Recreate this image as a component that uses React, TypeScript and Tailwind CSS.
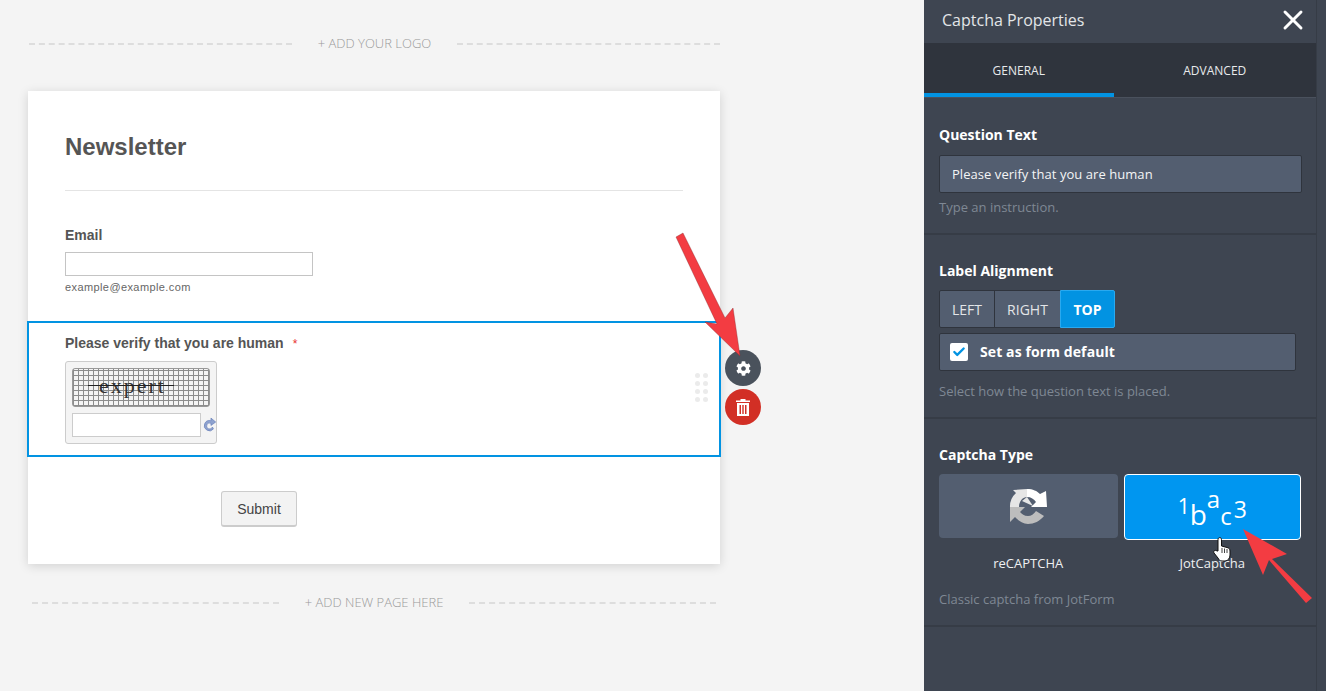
import { X, Check } from 'lucide-react';
import { FaCog } from 'react-icons/fa';

function AddLine({ label, className }: { label: string; className: string }) {
  return (
    <div className={`flex items-center gap-[26px] ${className}`}>
      <div className="flex-1 border-t-2 border-dashed border-[#dddddd]" />
      <span className="font-['Open_Sans',sans-serif] font-light text-[13px] text-[#9a9a9a] leading-4 pb-[2px]">{label}</span>
      <div className="flex-1 border-t-2 border-dashed border-[#dddddd]" />
    </div>
  );
}

function Section({ title, hint, children, className }: { title: string; hint: string; children: React.ReactNode; className: string }) {
  return (
    <section className={`px-[15px] border-b-2 border-[#363c46] ${className}`}>
      <h3 className="text-sm font-bold text-white leading-5">{title}</h3>
      {children}
      <p className="text-[13px] leading-[18px] text-[#7f8894]">{hint}</p>
    </section>
  );
}

function RecaptchaIcon() {
  return (
    <svg width="38" height="37" viewBox="0 0 38 37">
      <path d="M1 19A18 18 0 0 1 7 5L4 2L18 1V9C14 9 10 13 10 19Z" fill="#e6e6e6" />
      <path d="M13 13L24 18L18 9Z" fill="#e6e6e6" />
      <path d="M18 1C24 1 28 3 31 6L37 3L38 19H22L27 14C25 11 22 9 18 9Z" fill="#ffffff" />
      <path d="M1 19V34L6 29C10 33 14 36 19 36C25 36 31 33 35 28L27 23C25 26 22 28 19 28C15 28 13 26 11 24L16 19Z" fill="#bdbdbd" />
    </svg>
  );
}

export default function App() {
  return (
    <div className="relative flex w-[1326px] h-[691px] overflow-hidden font-['Open_Sans',sans-serif]">
      {/* form canvas */}
      <main className="w-[924px] h-full bg-[#f4f4f4] pl-[28px] pt-[35px]">
        <AddLine label="+ ADD YOUR LOGO" className="w-[691px] h-[18px] ml-px" />

        <div className="mt-[38px] w-[692px] h-[473px] bg-white shadow-[0_2px_10px_rgba(0,0,0,0.14)] font-['Liberation_Sans',sans-serif]">
          <div className="mx-[37px] h-[100px] pt-[40px] border-b border-[#e4e4e4]">
            <h1 className="text-2xl leading-8 font-bold text-[#555555]">Newsletter</h1>
          </div>

          <div className="h-[130px] px-[37px] pt-[36px]">
            <label className="block text-sm leading-4 font-bold text-[#555555]">Email</label>
            <div className="mt-[9px] w-[248px] h-[24px] border border-[#c4c4c4] bg-white" />
            <p className="mt-[5px] text-[11px] leading-[13px] tracking-[0.4px] text-[#666666]">example@example.com</p>
          </div>

          {/* selected field */}
          <div className="relative -mx-px h-[136px] border-2 border-[#0293e2] pl-[36px] pt-[12px]">
            <div className="text-sm leading-4 font-bold text-[#555555]">
              Please verify that you are human
              <span className="ml-[9px] font-normal text-xs text-[#e8312f]">*</span>
            </div>
            <div className="mt-[9px] w-[152px] h-[83px] rounded-[3px] border border-[#cccccc] bg-[#f4f4f4] pl-[6px] pt-[6px]">
              <div className="w-[138px] h-[39px] rounded-[3px] border border-[#999999] bg-[#f4f4f4] bg-[repeating-linear-gradient(90deg,#8c8c8c_0_1px,transparent_1px_5px),repeating-linear-gradient(0deg,#8c8c8c_0_1px,transparent_1px_5px)] flex items-center pl-[26px]">
                <span className="relative font-['Liberation_Serif',serif] text-[22px] leading-5 tracking-[2px] text-[#333333] -mt-[3px]">
                  expert
                  <span className="absolute -left-[11px] -right-[8px] top-[9px] h-px bg-[#222222]" />
                </span>
              </div>
              <div className="mt-[6px] flex items-center gap-[2px]">
                <div className="w-[130px] h-[24px] border border-[#cccccc] bg-white" />
                <svg width="13" height="16" viewBox="0 0 13 15">
                  <path d="M10.5 11.5A5.2 5.2 0 1 1 8 3.2V0.5L12.8 4.5L8 8V5.8A3 3 0 1 0 9.5 9.5Z" fill="#8ea2cf" stroke="#5f78b4" strokeWidth="0.6" />
                </svg>
              </div>
            </div>
            {/* drag handle */}
            <div className="absolute left-[666px] top-[50px] grid grid-cols-2 gap-x-[3px] gap-y-[3px]">
              {[0, 1, 2, 3, 4, 5, 6, 7].map((dot) => (
                <span key={dot} className="w-[5px] h-[5px] rounded-full bg-[#ebebeb]" />
              ))}
            </div>
          </div>

          <div className="mt-[34px] pl-[193px]">
            <button className="w-[76px] h-[36px] rounded-[3px] border border-[#cccccc] border-b-2 bg-[#f3f3f3] text-sm text-[#444444]">Submit</button>
          </div>
        </div>

        <AddLine label="+ ADD NEW PAGE HERE" className="w-[684px] h-[18px] ml-[4px] mt-[30px]" />
      </main>

      {/* properties panel */}
      <aside className="w-[402px] h-full bg-[#3e4551] text-white">
        <div className="w-[393px] h-full border-r border-[#363c46]">
          <header className="h-[43px] flex items-center justify-between pl-[18px] pr-[7px] pb-[3px]">
            <h2 className="text-base leading-5 text-[#e3e5e8]">Captcha Properties</h2>
            <X size={32} strokeWidth={2.2} className="text-white -my-2" />
          </header>
          <div className="flex h-[54px] bg-[#2f343d]">
            <div className="w-[190px] flex items-center justify-center border-b-4 border-[#0293e2] text-xs text-[#e8eaec] pt-[6px]">GENERAL</div>
            <div className="w-[203px] flex items-center justify-center text-xs text-[#e8eaec] pt-[2px]">ADVANCED</div>
          </div>

          <Section title="Question Text" hint="Type an instruction." className="border-t border-t-[#4a515d] h-[138px] pt-[27px]">
            <div className="mt-[10px] mb-[5px] w-[363px] h-[38px] flex items-center pl-[12px] pt-px rounded-[2px] border border-[#2f343d] bg-[#535e70] text-[13px] tracking-[0.05px] text-[#f4f5f6]">
              Please verify that you are human
            </div>
          </Section>

          <Section title="Label Alignment" hint="Select how the question text is placed." className="h-[184px] pt-[26px]">
            <div className="mt-[9px] flex h-[38px] text-sm">
              <div className="w-[56px] flex items-center justify-center pt-px rounded-l-[2px] border border-[#2f343d] bg-[#535e70] text-[#e3e5e8]">LEFT</div>
              <div className="w-[67px] -ml-px flex items-center justify-center pt-px border border-[#2f343d] bg-[#535e70] text-[#e3e5e8]">RIGHT</div>
              <div className="w-[55px] -ml-px flex items-center justify-center pt-px rounded-r-[2px] border border-[#2aa9ef] bg-[#0293e2] font-bold text-white">TOP</div>
            </div>
            <div className="mt-[5px] mb-[11px] w-[357px] h-[38px] flex items-center gap-[12px] pl-[10px] rounded-[2px] border border-[#2f343d] bg-[#535e70]">
              <span className="w-[18px] h-[18px] rounded-[2px] bg-white flex items-center justify-center">
                <Check size={14} strokeWidth={4} className="text-[#0293e2]" />
              </span>
              <span className="text-sm tracking-[0.1px] font-bold text-white">Set as form default</span>
            </div>
          </Section>

          <Section title="Captcha Type" hint="Classic captcha from JotForm" className="h-[208px] pt-[26px]">
            <div className="mt-[9px] flex gap-[6px]">
              <div className="w-[179px] h-[64px] rounded-[4px] bg-[#535e70] flex items-center justify-center">
                <RecaptchaIcon />
              </div>
              <div className="w-[178px] h-[66px] rounded-[4px] border border-white bg-[#0096f0] flex items-start justify-center text-white leading-none">
                <span className="mt-[21px] text-[21px]">1</span>
                <span className="mt-[25px] text-[28px]">b</span>
                <span className="mt-[12px] text-[24px]">a</span>
                <span className="mt-[29px] text-[24px]">c</span>
                <span className="mt-[23px] ml-[2px] text-[23px]">3</span>
              </div>
            </div>
            <div className="mt-[13px] mb-[17px] flex gap-[6px] text-[13px] leading-5 text-[#eef0f2]">
              <span className="w-[179px] text-center">reCAPTCHA</span>
              <span className="w-[178px] text-center">JotCaptcha</span>
            </div>
          </Section>
        </div>
      </aside>

      {/* field actions */}
      <button className="absolute left-[725px] top-[350px] w-9 h-9 rounded-full bg-[#4a525c] flex items-center justify-center text-white">
        <FaCog size={15} />
      </button>
      <button className="absolute left-[725px] top-[389px] w-9 h-9 rounded-full bg-[#d22f25] flex items-center justify-center">
        <svg width="14" height="18" viewBox="0 0 14 18">
          <path d="M0 2.5H4.5V1H9.5V2.5H14V4H0ZM1 5H13V18H1ZM3.5 7V16H5V7ZM6.3 7V16H7.7V7ZM9 7V16H10.5V7Z" fill="#ffffff" fillRule="evenodd" />
        </svg>
      </button>

      {/* annotation arrows and cursor */}
      <svg className="absolute left-0 top-0 pointer-events-none" width="1326" height="691" viewBox="0 0 1326 691">
        <polygon points="676,237 683,233 725,318 733,308 740,356 705,322 717,324" fill="#f33c42" stroke="#8a2a2e" strokeWidth="0.4" />
        <polygon points="1243,529 1287,554 1272,559 1312,598 1306,603 1269,560 1263,575" fill="#f33c42" />
        <g transform="translate(2 0)">
          <path d="M1216 551V539.5C1216 537 1219.5 537 1219.5 539.5V546L1225 547.5C1227 548 1228 549 1228 551V555C1228 558 1226 561 1223 561H1220C1218 561 1217 560 1216 558L1212 553C1211 551 1213 549.5 1215 551Z" fill="#ffffff" stroke="#111111" strokeWidth="1" />
          <path d="M1220 548V553M1222.5 548.5V553M1225 549V553" stroke="#111111" strokeWidth="0.8" />
        </g>
      </svg>
    </div>
  );
}
